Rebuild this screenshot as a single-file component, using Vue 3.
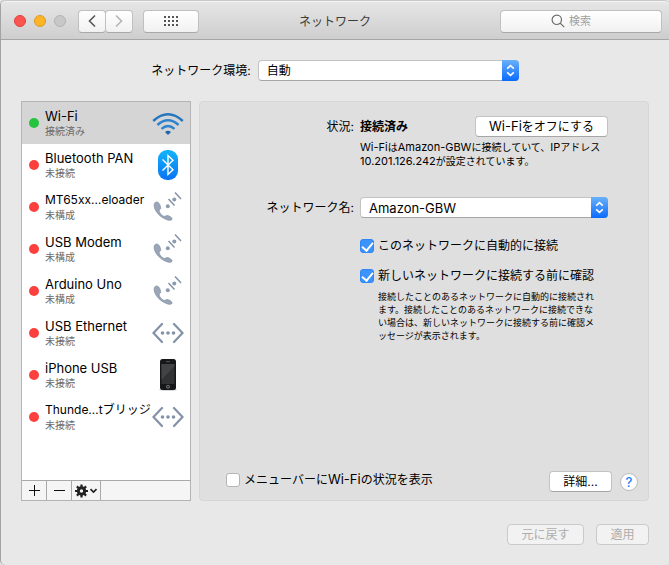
<script setup>
import { ref } from 'vue'

const services = [
  { name: 'Wi-Fi', status: '接続済み', icon: 'wifi', connected: true },
  { name: 'Bluetooth PAN', status: '未接続', icon: 'bluetooth' },
  { name: 'MT65xx…eloader', status: '未構成', icon: 'modem', truncated: true },
  { name: 'USB Modem', status: '未構成', icon: 'modem' },
  { name: 'Arduino Uno', status: '未構成', icon: 'modem' },
  { name: 'USB Ethernet', status: '未接続', icon: 'ethernet' },
  { name: 'iPhone USB', status: '未接続', icon: 'phone' },
  { name: 'Thunde…tブリッジ', status: '未接続', icon: 'ethernet', truncated: true },
]
const selected = ref(0)
const autoJoin = ref(true)
const askJoin = ref(true)
const showMenu = ref(false)
</script>

<template>
  <div class="window">
    <header class="titlebar">
      <div class="tools">
        <div class="lights">
          <i class="light red"></i><i class="light yellow"></i><i class="light off"></i>
        </div>
        <div class="nav">
          <button class="tool" aria-label="戻る">
            <svg width="10" height="14" viewBox="0 0 10 14"><path d="M8 1.5 2.5 7 8 12.5" fill="none" stroke="#555" stroke-width="1.6" /></svg>
          </button>
          <button class="tool" aria-label="進む">
            <svg width="10" height="14" viewBox="0 0 10 14"><path d="M2 1.5 7.5 7 2 12.5" fill="none" stroke="#b4b4b4" stroke-width="1.6" /></svg>
          </button>
        </div>
        <button class="tool all" aria-label="すべてを表示">
          <svg width="14" height="10" viewBox="0 0 14 10" fill="#555">
            <template v-for="r in 3" :key="r">
              <rect v-for="c in 4" :key="c" :x="(c - 1) * 4" :y="(r - 1) * 4" width="2" height="2" />
            </template>
          </svg>
        </button>
      </div>
      <h1 class="title">ネットワーク</h1>
      <label class="search">
        <svg width="14" height="14" viewBox="0 0 14 14" fill="none" stroke="#6c6c6c" stroke-width="1.2"><circle cx="5.8" cy="5.8" r="4.7" /><path d="m9.2 9.2 4 4" /></svg>
        <input type="text" placeholder="検索" aria-label="検索" />
      </label>
    </header>

    <div class="location">
      <label for="location">ネットワーク環境:</label>
      <div class="popup wide">
        <select id="location"><option>自動</option></select>
        <span class="arrows"><svg width="17" height="21" viewBox="0 0 17 21"><path d="M5.200 8.600 8.500 5.600l3.300 3M5.200 12.400l3.300 3 3.300-3" fill="none" stroke="#fff" stroke-width="1.600" /></svg></span>
      </div>
    </div>

    <main class="main">
      <aside class="sidebar">
        <ul class="services">
          <li v-for="(s, i) in services" :key="s.name">
            <button class="service" :class="{ active: i === selected }" @click="selected = i">
              <i class="dot" :class="{ on: s.connected }"></i>
              <span class="text">
                <span class="name" :class="{ truncated: s.truncated }">{{ s.name }}</span>
                <span class="status">{{ s.status }}</span>
              </span>
              <svg v-if="s.icon === 'wifi'" class="icon" viewBox="0 0 32 32" fill="none" stroke="#2d83cf" stroke-width="2.4">
                <path d="M1.200 14Q16 .5 30.800 14" stroke="#2576bd" />
                <path d="M5.400 18Q16 8.500 26.600 18" />
                <path d="M9.500 21.800Q16 16 22.500 21.800" />
                <path d="M13 25Q16 22.600 19 25L16 28z" fill="#1c66ae" stroke="none" />
              </svg>
              <svg v-else-if="s.icon === 'bluetooth'" class="icon" viewBox="0 0 32 32">
                <defs><linearGradient id="bt" x1="0" y1="0" x2="0" y2="1"><stop offset="0" stop-color="#13b4fb" /><stop offset="1" stop-color="#0a72f2" /></linearGradient></defs>
                <rect x="6" y="1" width="20" height="30" rx="9" fill="url(#bt)" />
                <path d="m10.500 10.500 10.500 10.300-5 4.700v-19l5 4.700L10.500 21.500" fill="none" stroke="#fff" stroke-width="1.400" />
              </svg>
              <svg v-else-if="s.icon === 'modem'" class="icon" viewBox="0 0 32 32">
                <path transform="translate(0 6.500) scale(1 .8)" d="M4.500 5.600C2.600 6 1.900 7.800 2.200 11c.8 7.200 6.700 14.600 13.600 17.200 2.300.8 4.300.2 4.300-1.600 0-1.400-3-4-5-4-1.300 0-1.800 1.200-2.900 1-2.300-.5-5.400-5.300-5-7.700.3-1.200 1.700-1.300 1.500-3.200-.3-2.900-1.900-7.500-4.200-7.100z" fill="#9aa6b8" stroke="#78869b" stroke-width=".7" />
                <g fill="#8d9bb0"><circle cx="15.800" cy="15.300" r="2" /><circle cx="22.300" cy="8.500" r="2" /></g>
                <path d="m16.500 8 6 6.500M23 1.500l6 6.500" stroke="#8492a7" stroke-width="1.500" />
              </svg>
              <svg v-else-if="s.icon === 'ethernet'" class="icon" viewBox="0 0 32 32">
                <path d="M10 7 1.500 16 10 25M22 7 30.500 16 22 25" fill="none" stroke="#8392a8" stroke-width="2.200" stroke-linecap="round" />
                <g fill="#8392a8"><circle cx="10.500" cy="16" r="1.800" /><circle cx="16" cy="16" r="1.800" /><circle cx="21.500" cy="16" r="1.800" /></g>
              </svg>
              <svg v-else class="icon" viewBox="0 0 32 32">
                <ellipse cx="16" cy="30.700" rx="9" ry="1" fill="#ccc" />
                <rect x="8" y="0" width="16" height="31" rx="2.500" fill="#161719" />
                <rect x="9.500" y="5" width="13" height="20" fill="#303234" />
                <path d="M9.500 5h13v2l-13 14z" fill="#414345" />
                <path d="M14 2.700h4" stroke="#555" />
                <rect x="14.700" y="26.500" width="2.600" height="2.600" rx=".7" fill="none" stroke="#aaa" stroke-width=".7" />
              </svg>
            </button>
          </li>
        </ul>
        <div class="actions">
          <button class="action" aria-label="追加"><svg width="11" height="11" viewBox="0 0 11 11"><path d="M5.500 0v11M0 5.500h11" stroke="#111" /></svg></button>
          <button class="action" aria-label="削除"><svg width="11" height="11" viewBox="0 0 11 11"><path d="M0 5.500h11" stroke="#111" /></svg></button>
          <button class="action gear" aria-label="操作">
            <svg width="23" height="14" viewBox="0 0 23 14">
              <circle cx="6.500" cy="7" r="3.200" fill="none" stroke="#222" stroke-width="3" />
              <g stroke="#222" stroke-width="2.200"><path d="M6.500 .5v2.500M6.500 11v2.500M0 7h2.500M10.500 7H13M1.900 2.400l1.800 1.800M9.300 9.800l1.800 1.800M1.900 11.600l1.800-1.800M9.300 4.200l1.800-1.800" /></g>
              <path d="m15.500 5.200 3 2.800 3-2.800" fill="none" stroke="#222" stroke-width="1.700" />
            </svg>
          </button>
        </div>
      </aside>

      <section class="panel">
        <div class="form">
          <span class="label">状況:</span>
          <div class="state">
            <strong>接続済み</strong>
            <button class="push toggle"><span class="latin">Wi-Fi</span>をオフにする</button>
          </div>
          <p class="info"><span class="small-latin">Wi-Fi</span>は<span class="small-latin">Amazon-GBW</span>に接続していて、<span class="small-latin">IP</span>アドレス<br /><span class="small-latin">10.201.126.242</span>が設定されています。</p>
          <label class="label network" for="network">ネットワーク名:</label>
          <div class="popup network">
            <select id="network" class="latin"><option>Amazon-GBW</option></select>
            <span class="arrows"><svg width="17" height="21" viewBox="0 0 17 21"><path d="M5.200 8.600 8.500 5.600l3.300 3M5.200 12.400l3.300 3 3.300-3" fill="none" stroke="#fff" stroke-width="1.600" /></svg></span>
          </div>
          <label class="check first"><input v-model="autoJoin" type="checkbox" />このネットワークに自動的に接続</label>
          <label class="check second"><input v-model="askJoin" type="checkbox" />新しいネットワークに接続する前に確認</label>
          <p class="hint">接続したことのあるネットワークに自動的に接続され<br />ます。接続したことのあるネットワークに接続できな<br />い場合は、新しいネットワークに接続する前に確認メ<br />ッセージが表示されます。</p>
        </div>
        <div class="panel-foot">
          <label class="check"><input v-model="showMenu" type="checkbox" /><span>メニューバーに<span class="latin">Wi-Fi</span>の状況を表示</span></label>
          <button class="push more">詳細...</button>
          <button class="help" aria-label="ヘルプ">?</button>
        </div>
      </section>
    </main>

    <footer class="footer">
      <button class="push revert" disabled>元に戻す</button>
      <button class="push apply" disabled>適用</button>
    </footer>
  </div>
</template>

<style>
body {
  background: #e4e4e4;
}
</style>

<style scoped>
* {
  box-sizing: border-box;
}
.window {
  display: flex;
  flex-direction: column;
  min-height: 100vh;
  border-left: 1px solid #a3a3a3;
  border-radius: 5px;
  background: #e8e8e8;
  color: #000;
  font: 12px/18px Inter, "Noto Sans CJK JP", sans-serif;
}
button,
input,
select {
  margin: 0;
  padding: 0;
  font: inherit;
  color: inherit;
}
svg {
  display: block;
  flex: none;
}
p,
h1,
ul {
  margin: 0;
  padding: 0;
}
.latin {
  font-size: 13px;
}
.small-latin {
  font-size: 11px;
}
.titlebar {
  display: grid;
  grid-template-columns: 1fr auto 1fr;
  align-items: center;
  height: 40px;
  padding: 2px 7px 0;
  border-top: 1px solid #c9c9c9;
  border-bottom: 1px solid #a6a6a6;
  border-radius: 5px 5px 0 0;
  background: linear-gradient(#e6e6e6, #cecece);
  box-shadow: inset 0 1px #f4f4f4;
}
.tools {
  display: flex;
  align-items: center;
  padding-left: 6px;
}
.lights {
  display: flex;
  gap: 8px;
  margin-right: 12px;
}
.light {
  width: 12px;
  height: 12px;
  border: 1px solid #de403d;
  border-radius: 50%;
  background: #fc5551;
}
.yellow {
  border-color: #dd9a26;
  background: #fdb426;
}
.off {
  border-color: #b3b3b3;
  background: #c8c8c8;
}
.nav {
  display: flex;
  margin-right: 10px;
}
.tool {
  display: flex;
  align-items: center;
  justify-content: center;
  width: 28px;
  height: 23px;
  border: 1px solid #c0c0c0;
  border-bottom-color: #a9a9a9;
  border-radius: 4px;
  background: linear-gradient(#fff, #f1f1f1);
}
.nav .tool + .tool {
  margin-left: -1px;
}
.all {
  width: 56px;
}
.title {
  padding-top: 2px;
  font-size: 12px;
  font-weight: 400;
  color: #3c3c3c;
}
.search {
  display: flex;
  align-items: center;
  justify-self: end;
  gap: 4px;
  width: 162px;
  height: 23px;
  padding-left: 50px;
  border: 1px solid #c0c0c0;
  border-bottom-color: #a9a9a9;
  border-radius: 4px;
  background: linear-gradient(#fff, #f1f1f1);
}
.search input {
  width: 80px;
  font-size: 11px;
  border: 0;
  outline: 0;
  background: none;
}
.search input::placeholder {
  color: #a0a0a0;
}
.location {
  display: flex;
  align-items: center;
  justify-content: center;
  gap: 7px;
  padding: 20px 0;
}
.popup {
  display: grid;
  height: 21px;
}
.popup select,
.arrows {
  grid-area: 1 / 1;
}
.popup select {
  height: 21px;
  padding: 0 24px 0 8px;
  border: 1px solid #c3c3c3;
  border-bottom-color: #a6a6a6;
  border-radius: 4px;
  background: #fff;
  appearance: none;
}
.arrows {
  justify-self: end;
  border-radius: 0 4px 4px 0;
  background: linear-gradient(#68b1fa, #0b6bfd);
  pointer-events: none;
}
.wide {
  width: 261px;
}
.main {
  display: grid;
  flex: 1;
  grid-template-columns: 170px 1fr;
  gap: 8px;
  padding: 0 20px;
}
.sidebar {
  display: flex;
  flex-direction: column;
  border: 1px solid #b4b4b4;
  background: #fff;
}
.services {
  flex: 1;
  list-style: none;
}
.service {
  display: flex;
  align-items: center;
  width: 100%;
  height: 42px;
  padding: 0 6px 0 7px;
  border: 0;
  background: none;
  text-align: left;
}
.service.active {
  background: #d5d5d5;
}
.dot {
  flex: none;
  width: 10px;
  height: 10px;
  border-radius: 50%;
  background: #fc403e;
}
.dot.on {
  background: #25c33e;
}
.text {
  flex: 1;
  width: 0;
  margin-left: 6px;
  white-space: nowrap;
}
.name {
  display: block;
  font-size: 13px;
  line-height: 16px;
}
.name.truncated {
  font-size: 12px;
}
.status {
  display: block;
  font-size: 10px;
  line-height: 14px;
  color: #6b6b6b;
}
.icon {
  width: 32px;
  height: 32px;
}
.actions {
  display: flex;
  height: 20px;
  border-top: 1px solid #a9a9a9;
  background: #f5f5f5;
}
.action {
  display: flex;
  align-items: center;
  justify-content: center;
  width: 25px;
  border: 0;
  border-right: 1px solid #a9a9a9;
  background: none;
}
.gear {
  width: 29px;
}
.panel {
  display: flex;
  flex-direction: column;
  justify-content: space-between;
  border: 1px solid #d6d6d6;
  border-radius: 4px;
  background: #dfdfdf;
}
.form {
  display: grid;
  grid-template-columns: 1fr 248px;
  column-gap: 6px;
  align-items: center;
  padding: 14px 40px 0 0;
}
.label {
  text-align: right;
}
.state {
  display: flex;
  align-items: center;
  justify-content: space-between;
}
.push {
  height: 21px;
  border: 1px solid #c3c3c3;
  border-bottom-color: #a6a6a6;
  border-radius: 4px;
  background: #fff;
  line-height: 18px;
  white-space: nowrap;
}
.push:disabled {
  border-color: #cacaca;
  background: #f2f2f2;
  color: #adadad;
}
.toggle {
  width: 133px;
}
.info,
.hint,
.form .check {
  grid-column: 2;
}
.info {
  margin-top: 3px;
  font-size: 10px;
  line-height: 14px;
  white-space: nowrap;
}
.network {
  margin-top: 29px;
}
.check {
  display: flex;
  align-items: center;
  gap: 4px;
  white-space: nowrap;
}
.first {
  margin-top: 19px;
}
.second {
  margin-top: 12px;
}
.check input {
  display: grid;
  place-items: center;
  width: 14px;
  height: 14px;
  border: 1px solid #b4b4b4;
  border-radius: 3px;
  background: #fff;
  appearance: none;
}
.check input:checked {
  border-color: #2f86f7;
  background: #3b93fb;
}
.check input:checked::before {
  content: "";
  width: 5px;
  height: 9px;
  margin-bottom: 2px;
  border: solid #fff;
  border-width: 0 2px 2px 0;
  transform: rotate(40deg);
}
.hint {
  margin-top: 5px;
  padding-left: 18px;
  font-size: 9px;
  line-height: 13px;
  white-space: nowrap;
}
.panel-foot {
  display: flex;
  align-items: center;
  padding: 0 10px 7px 26px;
}
.panel-foot .check {
  padding-bottom: 4px;
}
.more {
  width: 63px;
  margin-left: auto;
}
.help {
  width: 18px;
  height: 18px;
  margin-left: 8px;
  border: 1px solid #bababa;
  border-radius: 50%;
  background: #fff;
  color: #1a82fb;
  font-size: 13px;
  font-weight: 500;
  line-height: 16px;
}
.footer {
  display: flex;
  justify-content: flex-end;
  gap: 12px;
  padding: 23px 20px 20px;
}
.revert {
  width: 77px;
}
.apply {
  width: 53px;
}
</style>
